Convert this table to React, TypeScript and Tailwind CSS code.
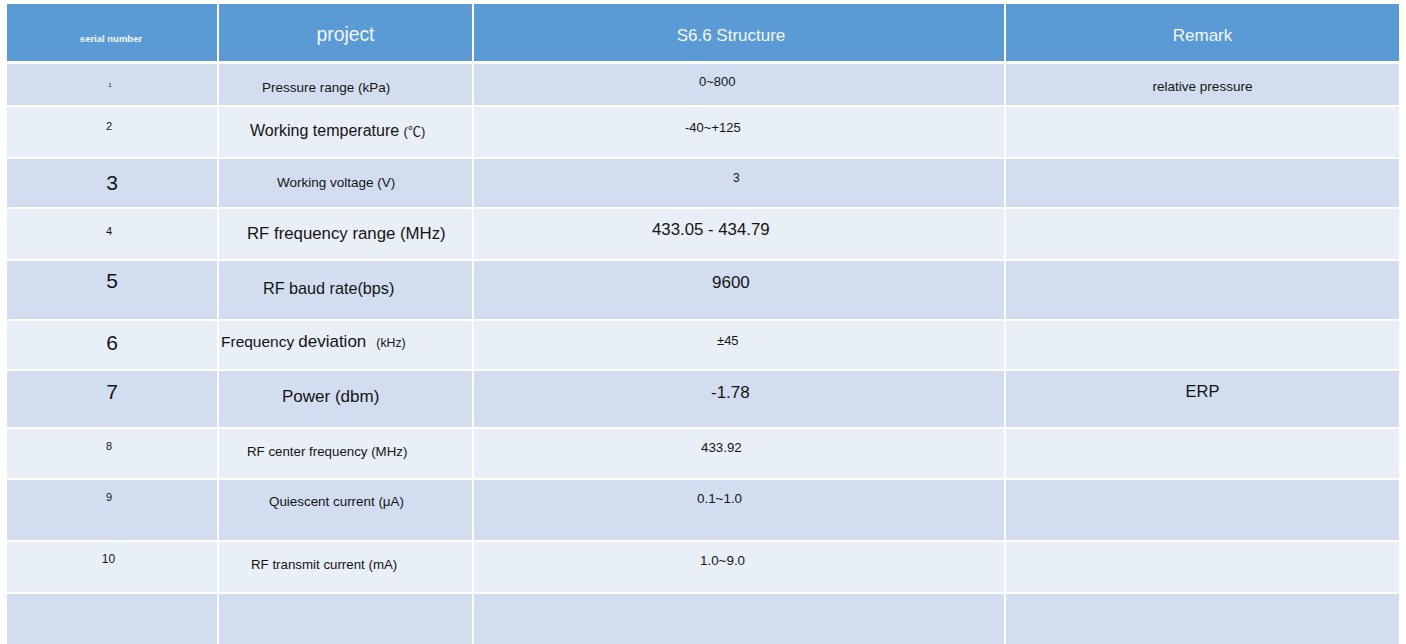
import React from "react";

type Row = {
  h: string;
  bg: string;
  c1: React.ReactNode;
  c1cls: string;
  c2: React.ReactNode;
  c2cls: string;
  c3: React.ReactNode;
  c3cls: string;
  c4?: React.ReactNode;
  c4cls?: string;
};

const DARK = "bg-[#d2deef]";
const LIGHT = "bg-[#e9eff7]";

const rows: Row[] = [
  {
    h: "h-[41px]",
    bg: DARK,
    c1: "1",
    c1cls: "pt-[18px] pr-[4px] text-[6px]",
    c2: "Pressure range (kPa)",
    c2cls: "pt-[17px] pl-[43px] text-[13.5px]",
    c3: "0~800",
    c3cls: "pt-[11px] pl-[225px] text-[13px]",
    c4: "relative pressure",
    c4cls: "pt-[16px] text-[13.5px]",
  },
  {
    h: "h-[50px]",
    bg: LIGHT,
    c1: "2",
    c1cls: "pt-[14px] pr-[6px] text-[11px]",
    c2: (
      <>
        Working temperature <span className="text-[13px] font-['Liberation_Sans','Noto_Sans_CJK_SC',sans-serif]">(℃)</span>
      </>
    ),
    c2cls: "pt-[16px] pl-[31px] text-[16px]",
    c3: "-40~+125",
    c3cls: "pt-[14px] pl-[211px] text-[13px]",
  },
  {
    h: "h-[48px]",
    bg: DARK,
    c1: "3",
    c1cls: "pt-[13px] text-[21px]",
    c2: "Working voltage (V)",
    c2cls: "pt-[17px] pl-[58px] text-[13.5px]",
    c3: "3",
    c3cls: "pt-[13px] pl-[259px] text-[12px]",
  },
  {
    h: "h-[50px]",
    bg: LIGHT,
    c1: "4",
    c1cls: "pt-[17px] pr-[6px] text-[11px]",
    c2: "RF frequency range (MHz)",
    c2cls: "pt-[17px] pl-[28px] text-[16.8px]",
    c3: "433.05 - 434.79",
    c3cls: "pt-[13px] pl-[178px] text-[16.8px]",
  },
  {
    h: "h-[58px]",
    bg: DARK,
    c1: "5",
    c1cls: "pt-[9px] text-[21px]",
    c2: "RF baud rate(bps)",
    c2cls: "pt-[19px] pl-[44px] text-[16.2px]",
    c3: "9600",
    c3cls: "pt-[13px] pl-[238px] text-[17px]",
  },
  {
    h: "h-[48px]",
    bg: LIGHT,
    c1: "6",
    c1cls: "pt-[11px] text-[21px]",
    c2: (
      <>
        <span className="text-[15.5px]">Frequency</span>
        <span className="ml-[4px] text-[17px]">deviation</span>
        <span className="ml-[10px] text-[12.3px]">(kHz)</span>
      </>
    ),
    c2cls: "pt-[12px] pl-[2px] text-[17px]",
    c3: "±45",
    c3cls: "pt-[13px] pl-[243px] text-[13px]",
  },
  {
    h: "h-[56px]",
    bg: DARK,
    c1: "7",
    c1cls: "pt-[10px] text-[21px]",
    c2: "Power (dbm)",
    c2cls: "pt-[17px] pl-[63px] text-[17px]",
    c3: "-1.78",
    c3cls: "pt-[13px] pl-[237px] text-[17px]",
    c4: "ERP",
    c4cls: "pt-[12px] text-[16.5px]",
  },
  {
    h: "h-[49px]",
    bg: LIGHT,
    c1: "8",
    c1cls: "pt-[12px] pr-[6px] text-[11px]",
    c2: "RF center frequency (MHz)",
    c2cls: "pt-[16px] pl-[28px] text-[13.3px]",
    c3: "433.92",
    c3cls: "pt-[12px] pl-[227px] text-[13.3px]",
  },
  {
    h: "h-[60px]",
    bg: DARK,
    c1: "9",
    c1cls: "pt-[12px] pr-[6px] text-[11px]",
    c2: "Quiescent current (μA)",
    c2cls: "pt-[15px] pl-[50px] text-[13.4px]",
    c3: "0.1~1.0",
    c3cls: "pt-[12px] pl-[223px] text-[13.4px]",
  },
  {
    h: "h-[50px]",
    bg: LIGHT,
    c1: "10",
    c1cls: "pt-[11px] pr-[7px] text-[12px]",
    c2: "RF transmit current (mA)",
    c2cls: "pt-[16px] pl-[32px] text-[13.3px]",
    c3: "1.0~9.0",
    c3cls: "pt-[12px] pl-[226px] text-[13.4px]",
  },
  {
    h: "h-[50px]",
    bg: DARK,
    c1: "",
    c1cls: "",
    c2: "",
    c2cls: "",
    c3: "",
    c3cls: "",
  },
];

export default function App() {
  return (
    <div className="min-h-screen bg-white pt-[4px] pl-[7px] font-['Liberation_Sans',Arial,sans-serif] text-[#141414]">
      <div className="flex w-[1392px] flex-col gap-[2px]">
        {/* header */}
        <div className="mb-[1px] flex h-[57px] gap-[2px] text-[#f3f7fc]">
          <div className="w-[210px] bg-[#5b9bd5] pt-[30px] pr-[2px] text-center text-[9.5px] font-bold leading-none">
            serial number
          </div>
          <div className="w-[253px] bg-[#5b9bd5] pt-[21px] text-center text-[19.3px] leading-none">
            project
          </div>
          <div className="w-[530px] bg-[#5b9bd5] pt-[23px] pr-[16px] text-center text-[17px] leading-none">
            S6.6 Structure
          </div>
          <div className="w-[393px] bg-[#5b9bd5] pt-[23px] text-center text-[17px] leading-none">
            Remark
          </div>
        </div>
        {rows.map((r, i) => (
          <div key={i} className={`flex gap-[2px] ${r.h}`}>
            <div className={`w-[210px] text-center leading-none ${r.bg} ${r.c1cls}`}>{r.c1}</div>
            <div className={`w-[253px] whitespace-nowrap text-left leading-none ${r.bg} ${r.c2cls}`}>{r.c2}</div>
            <div className={`w-[530px] whitespace-nowrap text-left leading-none ${r.bg} ${r.c3cls}`}>{r.c3}</div>
            <div className={`w-[393px] text-center leading-none ${r.bg} ${r.c4cls ?? ""}`}>{r.c4}</div>
          </div>
        ))}
      </div>
    </div>
  );
}
